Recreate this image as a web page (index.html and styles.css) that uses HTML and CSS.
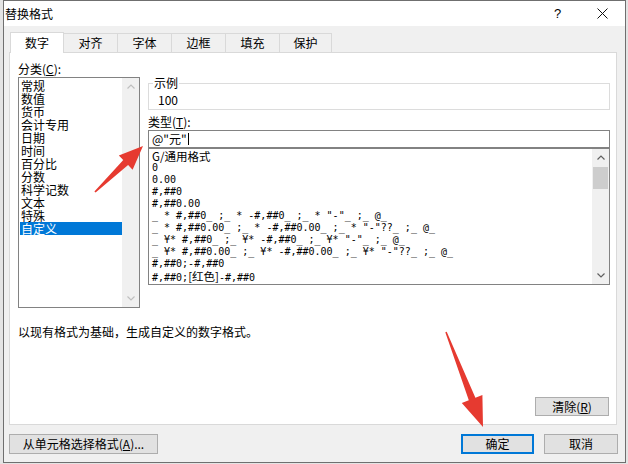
FILE: index.html
```html
<!DOCTYPE html>
<html>
<head>
<meta charset="utf-8">
<title>替换格式</title>
<link rel="stylesheet" href="styles.css">
</head>
<body>
<div class="dialog">
  <div class="titlebar">
    <span class="title">替换格式</span>
    <div class="caption-btns">
      <span class="cap-btn help">?</span>
      <span class="cap-btn close"><svg width="11" height="11" viewBox="0 0 11 11"><path d="M0.5 0.5L10.5 10.5M10.5 0.5L0.5 10.5" stroke="#111" stroke-width="1" fill="none"/></svg></span>
    </div>
  </div>
  <div class="body">
    <div class="tabs">
      <div class="tab active">数字</div>
      <div class="tab">对齐</div>
      <div class="tab">字体</div>
      <div class="tab">边框</div>
      <div class="tab">填充</div>
      <div class="tab last">保护</div>
    </div>
    <div class="panel">
      <div class="top">
        <div class="left">
          <div class="label">分类(<u>C</u>):</div>
          <div class="catlist">
            <div class="cat-items">
              <div class="cat">常规</div>
              <div class="cat">数值</div>
              <div class="cat">货币</div>
              <div class="cat">会计专用</div>
              <div class="cat">日期</div>
              <div class="cat">时间</div>
              <div class="cat">百分比</div>
              <div class="cat">分数</div>
              <div class="cat">科学记数</div>
              <div class="cat">文本</div>
              <div class="cat">特殊</div>
              <div class="cat selected">自定义</div>
            </div>
            <div class="vscroll disabled">
              <span class="sbtn"><svg width="8" height="5" viewBox="0 0 8 5"><path d="M0.5 4.5L4 1L7.5 4.5" fill="none" stroke-width="1.2"/></svg></span>
              <span class="track"></span>
              <span class="sbtn"><svg width="8" height="5" viewBox="0 0 8 5"><path d="M0.5 0.5L4 4L7.5 0.5" fill="none" stroke-width="1.2"/></svg></span>
            </div>
          </div>
        </div>
        <div class="right">
          <fieldset class="sample">
            <legend>示例</legend>
            <div class="sample-val">100</div>
          </fieldset>
          <div class="label type-label">类型(<u>T</u>):</div>
          <div class="textbox">@"元"<span class="caret"></span></div>
          <div class="fmtlist">
            <div class="fmt-items">
              <div class="fmt"><span class="cjk">G/通用格式</span></div>
              <div class="fmt">0</div>
              <div class="fmt">0.00</div>
              <div class="fmt">#,##0</div>
              <div class="fmt">#,##0.00</div>
              <div class="fmt">_ * #,##0_ ;_ * -#,##0_ ;_ * "-"_ ;_ @_ </div>
              <div class="fmt">_ * #,##0.00_ ;_ * -#,##0.00_ ;_ * "-"??_ ;_ @_ </div>
              <div class="fmt">_ ¥* #,##0_ ;_ ¥* -#,##0_ ;_ ¥* "-"_ ;_ @_ </div>
              <div class="fmt">_ ¥* #,##0.00_ ;_ ¥* -#,##0.00_ ;_ ¥* "-"??_ ;_ @_ </div>
              <div class="fmt">#,##0;-#,##0</div>
              <div class="fmt">#,##0;<span class="cjk">[红色]</span>-#,##0</div>
            </div>
            <div class="vscroll">
              <span class="sbtn"><svg width="8" height="5" viewBox="0 0 8 5"><path d="M0.5 4.5L4 1L7.5 4.5" fill="none" stroke-width="1.2"/></svg></span>
              <span class="thumb"></span>
              <span class="track"></span>
              <span class="sbtn"><svg width="8" height="5" viewBox="0 0 8 5"><path d="M0.5 0.5L4 4L7.5 0.5" fill="none" stroke-width="1.2"/></svg></span>
            </div>
          </div>
        </div>
      </div>
      <div class="desc">以现有格式为基础，生成自定义的数字格式。</div>
      <div class="clear-row"><button class="btn clear">清除(<u>R</u>)</button></div>
    </div>
    <div class="footer">
      <button class="btn pick">从单元格选择格式(<u>A</u>)...</button>
      <div class="spacer"></div>
      <button class="btn ok">确定</button>
      <button class="btn cancel">取消</button>
    </div>
  </div>
</div>
<svg class="annot" width="628" height="464" viewBox="0 0 628 464">
  <polygon points="95.6,192.6 128.1,165.1 132.6,169.8 143,146 118.8,155.4 123.3,160.1 94.4,191.4" fill="#e63a30"/>
  <polygon points="446.7,331.7 475.4,397.7 482.4,395 483,427 461.8,403 468.8,400.3 445.3,332.3" fill="#e63a30"/>
</svg>
</body>
</html>
```

FILE: styles.css
```css
* { box-sizing: border-box; }

html, body {
  margin: 0;
  padding: 0;
}

body {
  width: 628px;
  height: 464px;
  background: #e4e4e4;
  font-family: "Noto Sans CJK SC", "Noto Sans", sans-serif;
  font-size: 12px;
  color: #000;
  overflow: hidden;
}

.dialog {
  margin-left: 3px;
  width: 623px;
  height: 463px;
  border: 1px solid #6f6f6f;
  background: #f0f0f0;
  display: flex;
  flex-direction: column;
}

.titlebar {
  height: 25px;
  background: #fff;
  display: flex;
  align-items: center;
  padding-left: 1px;
}

.title {
  line-height: 16px;
  flex: 1;
}

.caption-btns {
  display: flex;
  height: 25px;
}

.cap-btn {
  width: 45px;
  height: 25px;
  display: flex;
  align-items: center;
  justify-content: center;
  font-family: "Liberation Sans", sans-serif;
  font-size: 13px;
}

.body {
  flex: 1;
  padding: 6px 8px 0 5px;
  display: flex;
  flex-direction: column;
}

.tabs {
  display: flex;
  align-items: flex-end;
  padding-left: 1px;
  height: 20px;
}

.tab {
  height: 19px;
  width: 55px;
  margin-left: -1px;
  border: 1px solid #d9d9d9;
  border-bottom: none;
  background: #f0f0f0;
  text-align: center;
  line-height: 17px;
}

.tab.active {
  margin-left: 0;
  width: 54px;
  height: 21px;
  margin-bottom: -1px;
  background: #fff;
  position: relative;
  z-index: 1;
  line-height: 19px;
}

.tab.last { width: 53px; }

.panel {
  height: 373px;
  background: #fff;
  border: 1px solid #d9d9d9;
  padding: 7px 6px 8px 8px;
  display: flex;
  flex-direction: column;
}

.top {
  display: flex;
  gap: 8px;
}

.left {
  width: 122px;
  flex: none;
}

.label {
  line-height: 17px;
  white-space: nowrap;
}

.catlist {
  height: 231px;
  border: 1px solid #828282;
  display: flex;
}

.cat-items {
  flex: 1;
  padding: 1px 0 0 1px;
}

.cat {
  line-height: 13px;
  height: 13px;
  padding-left: 1px;
  white-space: nowrap;
}

.cat.selected {
  background: #0078d7;
  color: #fff;
}

.vscroll {
  width: 17px;
  flex: none;
  background: #f0f0f0;
  display: flex;
  flex-direction: column;
}

.sbtn {
  height: 17px;
  display: flex;
  align-items: center;
  justify-content: center;
}

.sbtn svg path { stroke: #606060; }
.vscroll.disabled .sbtn svg path { stroke: #bfbfbf; }

.track { flex: 1; }

.thumb {
  height: 22px;
  margin: 1px 1px 0 1px;
  background: #cdcdcd;
}

.right {
  flex: 1;
  padding-top: 16px;
  min-width: 0;
}

.sample {
  margin: 0;
  min-width: 0;
  border: 1px solid #dcdcdc;
  padding: 0 0 2px 4px;
}

.sample legend {
  padding: 0 1px;
  line-height: 14px;
}

.sample-val {
  padding: 3px 0 0 5px;
  line-height: 14px;
}

.type-label {
  margin-top: 4px;
  line-height: 16px;
}

.textbox {
  height: 18px;
  border: 1px solid #828282;
  padding-left: 3px;
  line-height: 16px;
  display: flex;
  align-items: center;
}

.caret {
  display: inline-block;
  width: 1px;
  height: 12px;
  background: #000;
  margin-left: 1px;
}

.fmtlist {
  height: 137px;
  border: 1px solid #828282;
  display: flex;
}

.fmt-items {
  flex: 1;
  padding: 1px 0 0 3px;
  overflow: hidden;
}

.fmt {
  height: 12px;
  line-height: 12px;
  white-space: pre;
  font-family: "DejaVu Sans Mono", "Liberation Mono", "Noto Sans CJK SC", monospace;
  font-size: 10px;
}

.fmt .cjk {
  font-family: "Noto Sans CJK SC", sans-serif;
  font-size: 11.5px;
  line-height: 12px;
}

.desc {
  margin-top: 16px;
  line-height: 16px;
}

.clear-row {
  margin-top: auto;
  display: flex;
  justify-content: flex-end;
  padding-right: 1px;
}

.btn {
  font-family: "Noto Sans CJK SC", sans-serif;
  font-size: 12px;
  line-height: 16px;
  color: #000;
  background: #e1e1e1;
  border: 1px solid #adadad;
  padding: 0;
  margin: 0;
}

.btn.clear {
  width: 74px;
  height: 19px;
}

.footer {
  margin-top: 9px;
  margin-right: -1px;
  display: flex;
  height: 20px;
}

.btn.pick { width: 149px; height: 20px; }
.spacer { flex: 1; }
.btn.ok {
  width: 73px;
  height: 20px;
  border: 1px solid #0078d7;
  box-shadow: inset 0 0 0 1px #0078d7;
  margin-right: 10px;
}
.btn.cancel { width: 74px; height: 20px; }

.annot {
  position: absolute;
  top: 0;
  left: 0;
  pointer-events: none;
}
```
